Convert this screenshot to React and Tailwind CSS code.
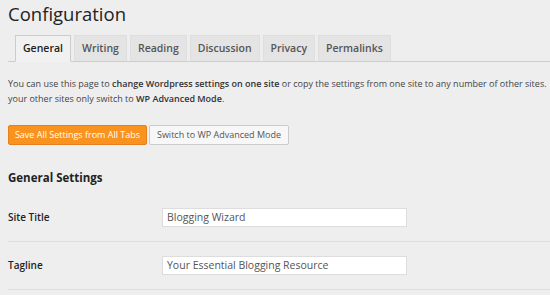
import React from "react";

const tabs = ["General", "Writing", "Reading", "Discussion", "Privacy", "Permalinks"];

const rows = [
  { label: "Site Title", value: "Blogging Wizard" },
  { label: "Tagline", value: "Your Essential Blogging Resource" },
];

export default function App() {
  return (
    <div
      className="w-[550px] h-[295px] overflow-hidden bg-[#eeeeee] pl-[8px] text-[#444]"
      style={{ fontFamily: '"Open Sans", "Noto Sans", sans-serif' }}
    >
      <h1 className="text-[18.5px] leading-[28px] font-normal text-[#222]">Configuration</h1>

      {/* Tabs */}
      <div className="mt-[7px] flex gap-[3px] border-b border-[#cccccc] pl-[7px]">
        {tabs.map((tab, i) => (
          <div
            key={tab}
            className={`-mb-px h-[27px] flex items-center px-[7px] text-[10.5px] font-semibold border ${
              i === 0
                ? "bg-[#f1f1f1] border-[#cccccc] border-b-[#f1f1f1] text-[#222]"
                : "bg-[#e4e4e4] border-[#dedede] border-b-[#cccccc] text-[#555]"
            }`}
          >
            {tab}
          </div>
        ))}
      </div>

      {/* Intro */}
      <div className="mt-[14px] text-[9px] leading-[15px] whitespace-nowrap">
        <p>
          You can use this page to <span className="font-semibold text-[#333]">change Wordpress settings on one site</span> or copy the settings from one site to any number of other sites.
        </p>
        <p>
          your other sites only switch to <span className="font-semibold text-[#333]">WP Advanced Mode</span>.
        </p>
      </div>

      {/* Buttons */}
      <div className="mt-[19px] flex gap-[2px]">
        <button className="h-[20px] w-[139px] whitespace-nowrap rounded-[2px] border border-[#e5801a] bg-[#f7931e] text-[9px] text-white">
          Save All Settings from All Tabs
        </button>
        <button className="h-[20px] w-[140px] whitespace-nowrap rounded-[2px] border border-[#cccccc] bg-[#f7f7f7] text-[9px] text-[#555]">
          Switch to WP Advanced Mode
        </button>
      </div>

      <h3 className="mt-[24px] text-[11.5px] leading-[18px] font-bold text-[#222]">General Settings</h3>

      {/* Settings table */}
      <div className="mt-[7px]">
        {rows.map((row) => (
          <div key={row.label} className="flex items-center border-b border-[#dddddd] py-[14px]">
            <div className="w-[154px] text-[10px] font-semibold text-[#222]">{row.label}</div>
            <div className="h-[19px] w-[245px] border border-[#dddddd] bg-white px-[4px] text-[10.5px] leading-[17px] text-[#555]">
              {row.value}
            </div>
          </div>
        ))}
      </div>
    </div>
  );
}
